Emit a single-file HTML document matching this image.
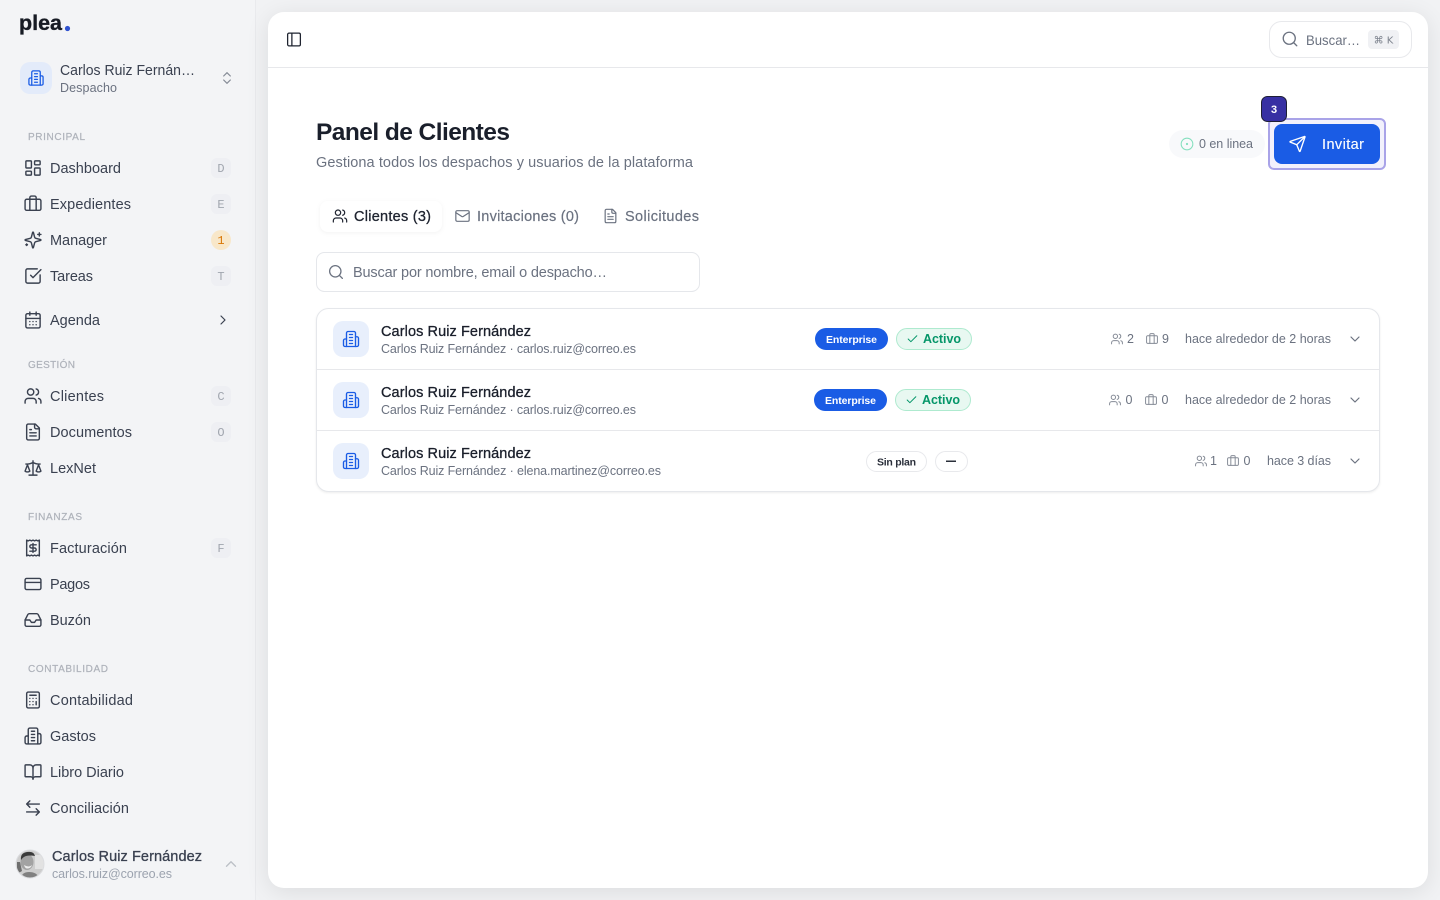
<!DOCTYPE html>
<html lang="es"><head><meta charset="utf-8"><title>Panel de Clientes</title>
<style>
html,body{margin:0;padding:0;width:1440px;height:900px;overflow:hidden;background:#f1f2f4}
#side{position:absolute;left:0;top:0;width:255px;height:900px;background:#f3f4f6;border-right:1px solid #e9eaed}
#card{position:absolute;left:268px;top:12px;width:1160px;height:876px;background:#fff;border-radius:16px;box-shadow:0 4px 24px rgba(0,0,0,.09)}
svg{position:absolute;left:0;top:0}
text{font-family:"Liberation Sans",sans-serif}
.n{font-size:14.5px;fill:#3a4150}
.l{font-size:10px;fill:#aeb2ba;stroke:#aeb2ba;stroke-width:.2}
.k{font-size:12px;fill:#a0a5ae;text-anchor:middle;font-family:"Liberation Mono",monospace}
.s{font-size:12.5px;fill:#6b7280}
.m{stroke-width:.3}
.i{fill:none;stroke:#3a4150;stroke-width:1.8;stroke-linecap:round;stroke-linejoin:round}
.g{fill:none;stroke:#6b7280;stroke-width:1.8;stroke-linecap:round;stroke-linejoin:round}
.b{fill:none;stroke:#1a5ce5;stroke-width:1.8;stroke-linecap:round;stroke-linejoin:round}
.r{fill:none;stroke:#858b96;stroke-width:1.8;stroke-linecap:round;stroke-linejoin:round}
</style></head><body>
<div id="side"></div><div id="card"></div>
<svg width="1440" height="900" viewBox="0 0 1440 900" xmlns="http://www.w3.org/2000/svg">
<defs>
<symbol id="dash" viewBox="0 0 24 24"><rect x="3" y="3" width="7" height="9" rx="1"/><rect x="14" y="3" width="7" height="5" rx="1"/><rect x="14" y="12" width="7" height="9" rx="1"/><rect x="3" y="16" width="7" height="5" rx="1"/></symbol>
<symbol id="case" viewBox="0 0 24 24"><path d="M16 20V4a2 2 0 0 0-2-2h-4a2 2 0 0 0-2 2v16"/><rect x="2" y="6" width="20" height="14" rx="2"/></symbol>
<symbol id="spark" viewBox="0 0 24 24"><path d="M9.937 15.5A2 2 0 0 0 8.5 14.063l-6.135-1.582a.5.5 0 0 1 0-.962L8.5 9.936A2 2 0 0 0 9.937 8.5l1.582-6.135a.5.5 0 0 1 .963 0L14.063 8.5A2 2 0 0 0 15.5 9.937l6.135 1.581a.5.5 0 0 1 0 .964L15.5 14.063a2 2 0 0 0-1.437 1.437l-1.582 6.135a.5.5 0 0 1-.963 0z"/><path d="M20 3v4M22 5h-4M4 17v2M5 18H3"/></symbol>
<symbol id="check2" viewBox="0 0 24 24"><path d="M21 10.656V19a2 2 0 0 1-2 2H5a2 2 0 0 1-2-2V5a2 2 0 0 1 2-2h12.344"/><path d="m9 11 3 3L22 4"/></symbol>
<symbol id="cal" viewBox="0 0 24 24"><path d="M8 2v4M16 2v4"/><rect x="3" y="4" width="18" height="18" rx="2"/><path d="M3 10h18M8 14h.01M12 14h.01M16 14h.01M8 18h.01M12 18h.01M16 18h.01"/></symbol>
<symbol id="users" viewBox="0 0 24 24"><path d="M16 21v-2a4 4 0 0 0-4-4H6a4 4 0 0 0-4 4v2"/><circle cx="9" cy="7" r="4"/><path d="M22 21v-2a4 4 0 0 0-3-3.87M16 3.13a4 4 0 0 1 0 7.75"/></symbol>
<symbol id="file" viewBox="0 0 24 24"><path d="M15 2H6a2 2 0 0 0-2 2v16a2 2 0 0 0 2 2h12a2 2 0 0 0 2-2V7Z"/><path d="M14 2v4a2 2 0 0 0 2 2h4M10 9H8M16 13H8M16 17H8"/></symbol>
<symbol id="scale" viewBox="0 0 24 24"><path d="m16 16 3-8 3 8c-.87.65-1.92 1-3 1s-2.13-.35-3-1Z"/><path d="m2 16 3-8 3 8c-.87.65-1.92 1-3 1s-2.13-.35-3-1Z"/><path d="M7 21h10M12 3v18M3 7h2c2 0 5-1 7-2 2 1 5 2 7 2h2"/></symbol>
<symbol id="receipt" viewBox="0 0 24 24"><path d="M4 2v20l2-1 2 1 2-1 2 1 2-1 2 1 2-1 2 1V2l-2 1-2-1-2 1-2-1-2 1-2-1-2 1Z"/><path d="M16 8h-6a2 2 0 1 0 0 4h4a2 2 0 1 1 0 4H8M12 17.5v-11"/></symbol>
<symbol id="cardi" viewBox="0 0 24 24"><rect x="2" y="5" width="20" height="14" rx="2"/><path d="M2 10h20"/></symbol>
<symbol id="inbox" viewBox="0 0 24 24"><path d="M22 12h-6l-2 3h-4l-2-3H2"/><path d="M5.45 5.11 2 12v6a2 2 0 0 0 2 2h16a2 2 0 0 0 2-2v-6l-3.45-6.89A2 2 0 0 0 16.76 4H7.24a2 2 0 0 0-1.79 1.11z"/></symbol>
<symbol id="calc" viewBox="0 0 24 24"><rect x="4" y="2" width="16" height="20" rx="2"/><path d="M8 6h8M16 14v4M16 10h.01M12 10h.01M8 10h.01M12 14h.01M8 14h.01M12 18h.01M8 18h.01"/></symbol>
<symbol id="bld" viewBox="0 0 24 24"><path d="M6 22V4a2 2 0 0 1 2-2h8a2 2 0 0 1 2 2v18Z"/><path d="M6 12H4a2 2 0 0 0-2 2v6a2 2 0 0 0 2 2h2M18 9h2a2 2 0 0 1 2 2v9a2 2 0 0 1-2 2h-2M10 6h4M10 10h4M10 14h4M10 18h4"/></symbol>
<symbol id="book" viewBox="0 0 24 24"><path d="M12 7v14"/><path d="M3 18a1 1 0 0 1-1-1V4a1 1 0 0 1 1-1h5a4 4 0 0 1 4 4 4 4 0 0 1 4-4h5a1 1 0 0 1 1 1v13a1 1 0 0 1-1 1h-6a3 3 0 0 0-3 3 3 3 0 0 0-3-3z"/></symbol>
<symbol id="swap" viewBox="0 0 24 24"><path d="M8 3 4 7l4 4M4 7h16M16 21l4-4-4-4M20 17H4"/></symbol>
<symbol id="updown" viewBox="0 0 24 24"><path d="m7 15 5 5 5-5M7 9l5-5 5 5"/></symbol>
<symbol id="panel" viewBox="0 0 24 24"><rect x="3" y="3" width="18" height="18" rx="2"/><path d="M9 3v18"/></symbol>
<symbol id="search" viewBox="0 0 24 24"><circle cx="11" cy="11" r="8"/><path d="m21 21-4.3-4.3"/></symbol>
<symbol id="send" viewBox="0 0 24 24"><path d="M14.536 21.686a.5.5 0 0 0 .937-.024l6.5-19a.496.496 0 0 0-.635-.635l-19 6.5a.5.5 0 0 0-.024.937l7.93 3.18a2 2 0 0 1 1.112 1.11z"/><path d="m21.854 2.147-10.94 10.939"/></symbol>
<symbol id="mail" viewBox="0 0 24 24"><rect x="2" y="4" width="20" height="16" rx="2"/><path d="m22 7-8.97 5.7a1.94 1.94 0 0 1-2.06 0L2 7"/></symbol>
<symbol id="dot" viewBox="0 0 24 24"><circle cx="12" cy="12" r="10"/><circle cx="12" cy="12" r="1"/></symbol>
<symbol id="chk" viewBox="0 0 24 24"><path d="M20 6 9 17l-5-5"/></symbol>
<symbol id="down" viewBox="0 0 24 24"><path d="m6 9 6 6 6-6"/></symbol>
<symbol id="right" viewBox="0 0 24 24"><path d="m9 18 6-6-6-6"/></symbol>
<symbol id="up" viewBox="0 0 24 24"><path d="m18 15-6-6-6 6"/></symbol>
<clipPath id="av"><circle cx="30" cy="864" r="14"/></clipPath>
</defs>

<!-- logo -->
<text x="19" y="30" font-size="21" font-weight="700" fill="#171b24" stroke="#171b24" stroke-width=".35" textLength="43" lengthAdjust="spacingAndGlyphs">plea</text>
<circle cx="67.5" cy="28.5" r="2.6" fill="#2f52cf"/>

<!-- org switcher -->
<rect x="20" y="62" width="32" height="32" rx="10" fill="#e3ebfa"/>
<use href="#bld" class="b" x="27.5" y="69.5" width="17" height="17"/>
<text x="60" y="75" class="n" textLength="135" lengthAdjust="spacingAndGlyphs">Carlos Ruiz Fernán…</text>
<text x="60" y="92" class="s" textLength="57">Despacho</text>
<use href="#updown" class="r" x="219" y="70" width="16" height="16"/>

<!-- sections -->
<text x="28" y="140" class="l" textLength="57">PRINCIPAL</text>
<text x="28" y="368" class="l" textLength="47">GESTIÓN</text>
<text x="28" y="520" class="l" textLength="54">FINANZAS</text>
<text x="28" y="672" class="l" textLength="80">CONTABILIDAD</text>

<!-- nav -->
<g>
<use href="#dash" class="i" x="23.5" y="158.5" width="19" height="19"/><text x="50" y="173" class="n" textLength="71">Dashboard</text>
<use href="#case" class="i" x="23.5" y="194.5" width="19" height="19"/><text x="50" y="209" class="n" textLength="81">Expedientes</text>
<use href="#spark" class="i" x="23.5" y="230.5" width="19" height="19"/><text x="50" y="245" class="n" textLength="57">Manager</text>
<use href="#check2" class="i" x="23.5" y="266.5" width="19" height="19"/><text x="50" y="281" class="n" textLength="43">Tareas</text>
<use href="#cal" class="i" x="23.5" y="310.5" width="19" height="19"/><text x="50" y="325" class="n" textLength="50">Agenda</text>
<use href="#users" class="i" x="23.5" y="386.5" width="19" height="19"/><text x="50" y="401" class="n" textLength="54">Clientes</text>
<use href="#file" class="i" x="23.5" y="422.5" width="19" height="19"/><text x="50" y="437" class="n" textLength="82">Documentos</text>
<use href="#scale" class="i" x="23.5" y="458.5" width="19" height="19"/><text x="50" y="473" class="n" textLength="46">LexNet</text>
<use href="#receipt" class="i" x="23.5" y="538.5" width="19" height="19"/><text x="50" y="553" class="n" textLength="77">Facturación</text>
<use href="#cardi" class="i" x="23.5" y="574.5" width="19" height="19"/><text x="50" y="589" class="n" textLength="40">Pagos</text>
<use href="#inbox" class="i" x="23.5" y="610.5" width="19" height="19"/><text x="50" y="625" class="n" textLength="41">Buzón</text>
<use href="#calc" class="i" x="23.5" y="690.5" width="19" height="19"/><text x="50" y="705" class="n" textLength="83">Contabilidad</text>
<use href="#bld" class="i" x="23.5" y="726.5" width="19" height="19"/><text x="50" y="741" class="n" textLength="46">Gastos</text>
<use href="#book" class="i" x="23.5" y="762.5" width="19" height="19"/><text x="50" y="777" class="n" textLength="74">Libro Diario</text>
<use href="#swap" class="i" x="23.5" y="798.5" width="19" height="19"/><text x="50" y="813" class="n" textLength="79">Conciliación</text>
</g>

<!-- shortcuts -->
<g fill="#eeeff3">
<rect x="211" y="158" width="20" height="20" rx="6"/><rect x="211" y="194" width="20" height="20" rx="6"/><rect x="211" y="266" width="20" height="20" rx="6"/><rect x="211" y="386" width="20" height="20" rx="6"/><rect x="211" y="422" width="20" height="20" rx="6"/><rect x="211" y="538" width="20" height="20" rx="6"/>
</g>
<rect x="211" y="230" width="20" height="20" rx="10" fill="#f8e7c9"/>
<text x="221" y="172" class="k">D</text><text x="221" y="208" class="k">E</text>
<text x="221" y="244" class="k" style="fill:#d97706">1</text>
<text x="221" y="280" class="k">T</text><text x="221" y="400" class="k">C</text><text x="221" y="436" class="k">O</text><text x="221" y="552" class="k">F</text>
<use href="#right" class="i" x="215" y="312" width="16" height="16"/>

<!-- user -->
<g clip-path="url(#av)">
<rect x="16" y="850" width="28" height="28" fill="#cdcdcd"/>
<rect x="35" y="855" width="9" height="14" fill="#e2e2e2"/>
<ellipse cx="27" cy="862" rx="6.5" ry="8" fill="#a2a2a2"/>
<path d="M21 860q-1-7 6-8 7-1 8 4-5-1-9 0-3 1-5 4z" fill="#3a3a3a"/>
<path d="M17 862h3l2 9-5 3z" fill="#6e6e6e"/>
<path d="M21 878q1-6 8-6 8 0 10 6z" fill="#808080"/>
<path d="M24 865q5 3 8 0-1 3-4 3.500t-4-3.500z" fill="#ececec"/>
</g>
<circle cx="30" cy="864" r="14" fill="none" stroke="#dcdde0" stroke-width="1"/>
<text x="52" y="861" class="n m" stroke="#3a4150" textLength="150">Carlos Ruiz Fernández</text>
<text x="52" y="878" class="s" style="fill:#9ca3af" textLength="120">carlos.ruiz@correo.es</text>
<use href="#up" class="r" style="stroke:#bcc0c7" x="222" y="855" width="18" height="18"/>

<!-- header -->
<use href="#panel" class="i" style="stroke:#1f2430" x="285.500" y="31" width="17" height="17"/>
<rect x="268" y="67" width="1160" height="1" fill="#e7e8eb"/>
<rect x="1269.5" y="21.5" width="142" height="36" rx="12" fill="#fff" stroke="#e8e9ec"/>
<use href="#search" class="g" x="1281" y="30" width="18" height="18"/>
<text x="1306" y="45" font-size="14" fill="#6b7280" textLength="54" lengthAdjust="spacingAndGlyphs">Buscar…</text>
<rect x="1368" y="30" width="31" height="19" rx="4" fill="#f0f1f4"/>
<text x="1383.5" y="43.5" class="k" style="font-size:10px;fill:#7c828d;font-family:'DejaVu Sans','Liberation Sans',sans-serif">⌘ K</text>

<!-- title -->
<text x="316" y="140" font-size="24.500" font-weight="700" fill="#1a1f2b" textLength="194">Panel de Clientes</text>
<text x="316" y="167" font-size="14.5" fill="#6b7280" textLength="377">Gestiona todos los despachos y usuarios de la plataforma</text>

<!-- online + invite -->
<rect x="1169" y="130" width="96" height="28" rx="14" fill="#f8f9fb"/>
<use href="#dot" class="g" style="stroke:#84dfbe" x="1180" y="137" width="14" height="14"/>
<text x="1199" y="148" class="s" textLength="54">0 en linea</text>
<rect x="1269" y="119" width="116" height="50" rx="5" fill="#f2f1fc" stroke="#a9a3e8" stroke-width="2"/>
<rect x="1274" y="124" width="106" height="40" rx="8" fill="#1a5ce5"/>
<use href="#send" class="i" style="stroke:#fff" x="1288.5" y="135" width="18" height="18"/>
<text x="1322" y="149" font-size="14.5" fill="#fff" stroke="#fff" stroke-width=".12" textLength="42">Invitar</text>
<rect x="1261.5" y="96.5" width="25" height="25" rx="6" fill="#3730a3" stroke="#1e1f36"/>
<text x="1274" y="113" font-size="11" font-weight="700" fill="#fff" text-anchor="middle">3</text>

<!-- tabs -->
<rect x="320" y="201" width="122" height="31" rx="8" fill="#fff" style="filter:drop-shadow(0 1px 2px rgba(0,0,0,.05))"/>
<use href="#users" class="i" style="stroke:#1f2430" x="332" y="208" width="16" height="16"/>
<text x="354" y="221" font-size="14.5" fill="#1f2430" stroke="#1f2430" stroke-width=".3" textLength="77">Clientes (3)</text>
<use href="#mail" class="g" x="454.5" y="208" width="16" height="16"/>
<text x="477" y="221" font-size="14.5" fill="#6b7280" stroke="#6b7280" stroke-width=".2" textLength="102">Invitaciones (0)</text>
<use href="#file" class="g" x="602.5" y="208" width="16" height="16"/>
<text x="625" y="221" font-size="14.5" fill="#6b7280" stroke="#6b7280" stroke-width=".2" textLength="74">Solicitudes</text>

<!-- search -->
<rect x="316.5" y="252.5" width="383" height="39" rx="8" fill="#fff" stroke="#e5e7eb"/>
<use href="#search" class="g" x="327.500" y="263.500" width="17" height="17"/>
<text x="353" y="277" font-size="14.5" fill="#6b7280" textLength="254">Buscar por nombre, email o despacho…</text>

<!-- table -->
<rect x="316.5" y="308.5" width="1063" height="183" rx="12" fill="#fff" stroke="#e5e7eb" style="filter:drop-shadow(0 1px 1px rgba(0,0,0,.07))"/>
<rect x="317" y="369" width="1062" height="1" fill="#e7e8eb"/>
<rect x="317" y="430" width="1062" height="1" fill="#e7e8eb"/>

<!-- rows: left -->
<g>
<rect x="333" y="321" width="36" height="36" rx="10" fill="#e8effc"/><use href="#bld" class="b" x="342" y="330" width="18" height="18"/>
<rect x="333" y="382" width="36" height="36" rx="10" fill="#e8effc"/><use href="#bld" class="b" x="342" y="391" width="18" height="18"/>
<rect x="333" y="443" width="36" height="36" rx="10" fill="#e8effc"/><use href="#bld" class="b" x="342" y="452" width="18" height="18"/>
</g>
<g font-size="14.5" fill="#1a1f2b" stroke="#1a1f2b" stroke-width=".3">
<text x="381" y="336" textLength="150">Carlos Ruiz Fernández</text>
<text x="381" y="397" textLength="150">Carlos Ruiz Fernández</text>
<text x="381" y="458" textLength="150">Carlos Ruiz Fernández</text>
</g>
<text x="381" y="353" class="s" textLength="255">Carlos Ruiz Fernández · carlos.ruiz@correo.es</text>
<text x="381" y="414" class="s" textLength="255">Carlos Ruiz Fernández · carlos.ruiz@correo.es</text>
<text x="381" y="475" class="s" textLength="280">Carlos Ruiz Fernández · elena.martinez@correo.es</text>

<!-- badges -->
<rect x="815" y="328" width="73" height="22" rx="11" fill="#1a5ce5"/>
<text x="826" y="343" font-size="10.5" font-weight="700" fill="#fff" textLength="51">Enterprise</text>
<rect x="896.5" y="328.5" width="75" height="21" rx="10.5" fill="#e8f8f1" stroke="#aeeacf"/>
<use href="#chk" fill="none" stroke="#059669" stroke-width="1.8" stroke-linecap="round" stroke-linejoin="round" x="906" y="332.500" width="13" height="13"/>
<text x="923" y="343" font-size="12.5" font-weight="700" fill="#059669" textLength="38">Activo</text>

<rect x="814" y="389" width="73" height="22" rx="11" fill="#1a5ce5"/>
<text x="825" y="404" font-size="10.5" font-weight="700" fill="#fff" textLength="51">Enterprise</text>
<rect x="895.5" y="389.5" width="75" height="21" rx="10.5" fill="#e8f8f1" stroke="#aeeacf"/>
<use href="#chk" fill="none" stroke="#059669" stroke-width="1.8" stroke-linecap="round" stroke-linejoin="round" x="905" y="393.500" width="13" height="13"/>
<text x="922" y="404" font-size="12.5" font-weight="700" fill="#059669" textLength="38">Activo</text>

<rect x="866.5" y="451.5" width="60" height="20" rx="10" fill="#fff" stroke="#e8e9ec"/>
<text x="877" y="465.5" font-size="10.5" font-weight="700" fill="#2a2f3a" textLength="39">Sin plan</text>
<rect x="935.5" y="451.5" width="32" height="20" rx="10" fill="#fff" stroke="#e8e9ec"/>
<rect x="946" y="460.5" width="10" height="1.5" fill="#2a2f3a"/>

<!-- rows: right -->
<use href="#users" class="r" x="1110.500" y="332.500" width="13" height="13"/><text x="1127" y="343" class="s" textLength="7">2</text>
<use href="#case" class="r" x="1145.500" y="332.500" width="13" height="13"/><text x="1162" y="343" class="s" textLength="7">9</text>
<text x="1185" y="343" class="s" textLength="146">hace alrededor de 2 horas</text>
<use href="#down" class="g" x="1347" y="331" width="16" height="16"/>

<use href="#users" class="r" x="1108.500" y="393.500" width="13" height="13"/><text x="1125.500" y="404" class="s" textLength="8">0</text>
<use href="#case" class="r" x="1144.500" y="393.500" width="13" height="13"/><text x="1161.500" y="404" class="s" textLength="8">0</text>
<text x="1185" y="404" class="s" textLength="146">hace alrededor de 2 horas</text>
<use href="#down" class="g" x="1347" y="392" width="16" height="16"/>

<use href="#users" class="r" x="1194.500" y="454.500" width="13" height="13"/><text x="1210" y="465" class="s" textLength="6">1</text>
<use href="#case" class="r" x="1226.500" y="454.500" width="13" height="13"/><text x="1243.500" y="465" class="s" textLength="8">0</text>
<text x="1267" y="465" class="s" textLength="64">hace 3 días</text>
<use href="#down" class="g" x="1347" y="453" width="16" height="16"/>
</svg>
</body></html>
